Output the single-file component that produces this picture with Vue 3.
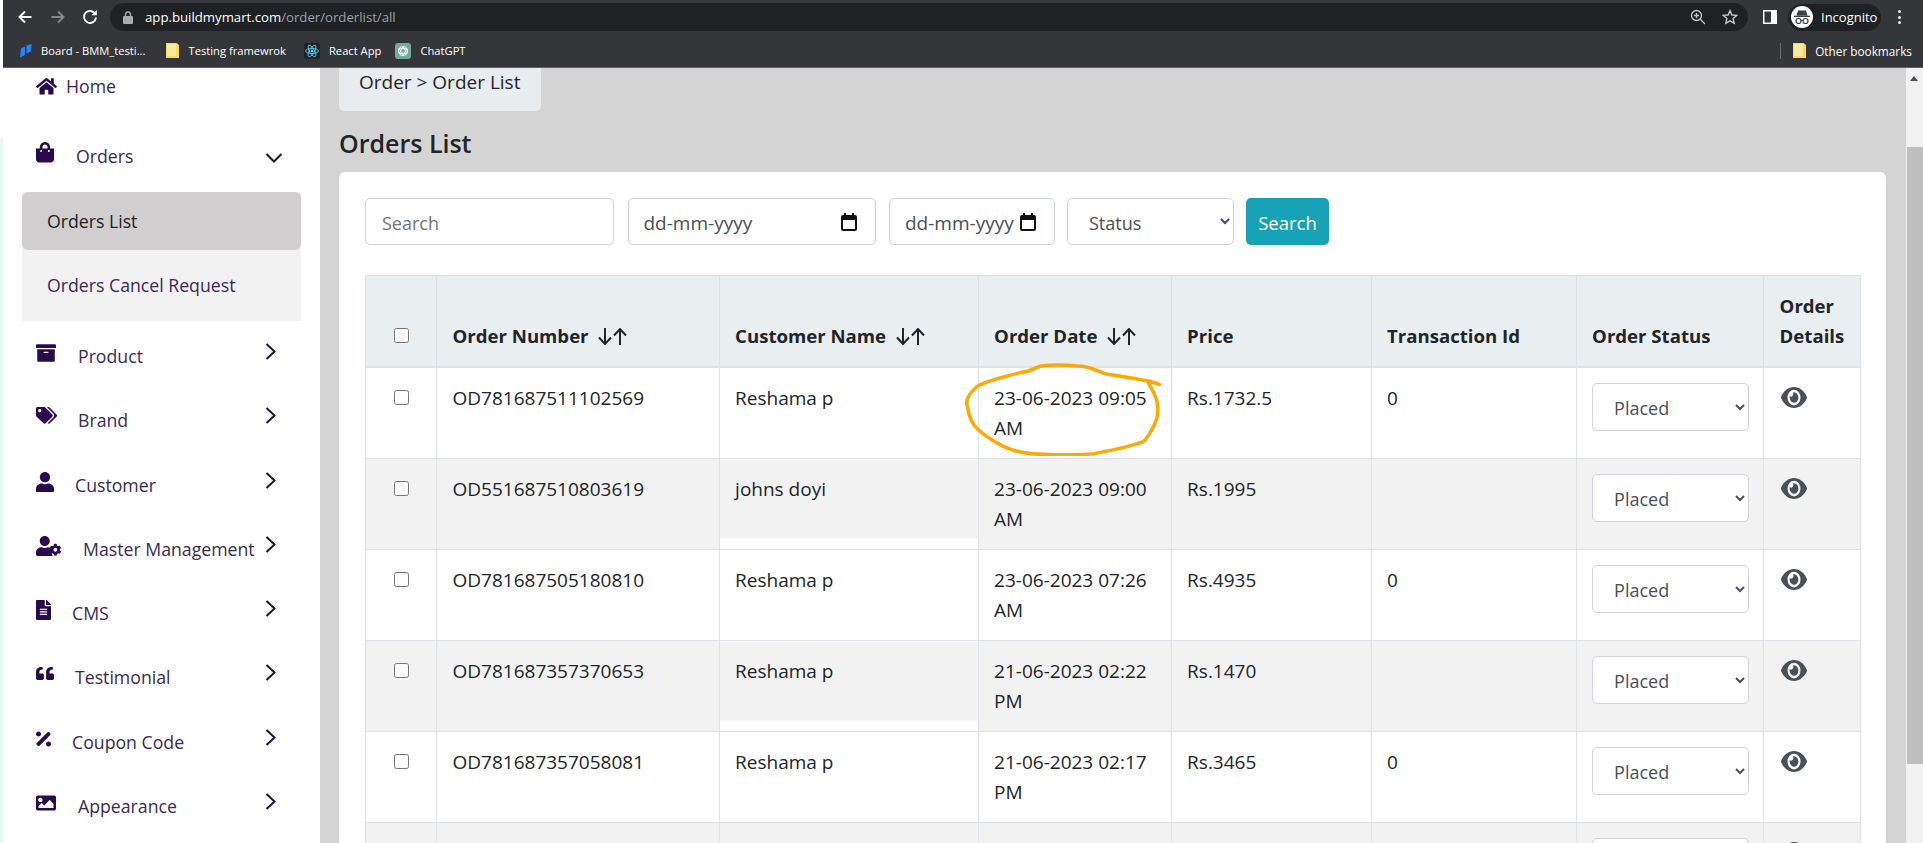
<template>
  <div class="page">
    <!-- browser chrome -->
    <header class="browser">
      <div class="toolbar">
        <svg class="tb-back" width="16" height="16" viewBox="0 0 16 16"><path d="M14.500 8H2.500M8 2.500 2.500 8 8 13.500" fill="none" stroke="#fff" stroke-width="2"/></svg>
        <svg class="tb-fwd" width="16" height="16" viewBox="0 0 16 16"><path d="M1.500 8h12M8 2.500 13.500 8 8 13.500" fill="none" stroke="#85878a" stroke-width="2"/></svg>
        <svg class="tb-reload" width="16" height="16" viewBox="0 0 16 16"><path d="M13.400 5.200A6 6 0 1 0 14 8.500" fill="none" stroke="#fff" stroke-width="1.900"/><path d="M9.500 6.200h5.300V.9z" fill="#fff"/></svg>
        <div class="address">
          <svg width="10" height="13" viewBox="0 0 10 13"><path d="M2.500 5.500V3.500a2.500 2.500 0 0 1 5 0v2" fill="none" stroke="#a9abae" stroke-width="1.300"/><rect y="5" width="10" height="8" rx="1" fill="#a9abae"/></svg>
          <span class="url"><b>app.buildmymart.com</b>/order/orderlist/all</span>
          <svg class="addr-zoom" width="16" height="16" viewBox="0 0 16 16"><circle cx="6.500" cy="6.500" r="5" fill="none" stroke="#c4c6c9" stroke-width="1.300"/><path d="M10 10l5 5M4 6.500h5M6.500 4v5" stroke="#c4c6c9" stroke-width="1.300"/></svg>
          <svg class="addr-star" width="16" height="16" viewBox="0 0 16 16"><path d="M8 1.600 9.900 6l4.800.4-3.600 3.200 1.100 4.700L8 11.800l-4.200 2.500 1.100-4.700L1.300 6.400 6.100 6z" fill="none" stroke="#c4c6c9" stroke-width="1.400"/></svg>
        </div>
        <svg class="tb-panel" width="14" height="14" viewBox="0 0 14 14"><rect width="14" height="14" fill="#fff"/><rect x="1.500" y="1.500" width="6.500" height="11" fill="#35363a"/></svg>
        <div class="profile">
          <span class="avatar">
            <svg width="18" height="16" viewBox="0 0 18 16"><path d="M5 1.500h8l1.500 5h-11zM1 6.800h16v1.200H1z" fill="#3c4043"/><g fill="none" stroke="#3c4043" stroke-width="1.200"><circle cx="5.500" cy="12" r="2.500"/><circle cx="12.500" cy="12" r="2.500"/><path d="M8 11.500h2"/></g></svg>
          </span>
          <span class="profile-name">Incognito</span>
        </div>
        <span class="menu-dots"><i></i><i></i><i></i></span>
      </div>
      <div class="bookmarks">
        <span class="bm bm-board">
          <svg width="13" height="14" viewBox="0 0 13 14"><path d="M2 4.500 6 2.500V11L1 13.500zM7.500 1.500 12.500 0 12 7.500 7.500 9.500z" fill="#2684ff"/></svg>
          Board - BMM_testi...
        </span>
        <span class="bm">
          <svg class="folder" width="13" height="15" viewBox="0 0 13 15"><path d="M0 0h10.500L13 2v13H0z" fill="#fdd663"/><path d="M1 1h9v12H1z" fill="#fee9a0"/></svg>
          Testing framewrok
        </span>
        <span class="bm bm-react">
          <span class="react-ico">
            <svg width="14" height="14" viewBox="0 0 14 14"><g fill="none" stroke="#61dafb" stroke-width=".8"><ellipse cx="7" cy="7" rx="6.500" ry="2.500"/><ellipse cx="7" cy="7" rx="6.500" ry="2.500" transform="rotate(60 7 7)"/><ellipse cx="7" cy="7" rx="6.500" ry="2.500" transform="rotate(120 7 7)"/></g><circle cx="7" cy="7" r="1.300" fill="#61dafb"/></svg>
          </span>
          React App
        </span>
        <span class="bm">
          <span class="gpt-ico">
            <svg width="12" height="12" viewBox="0 0 12 12"><g fill="none" stroke="#fff" stroke-width=".9"><circle cx="6" cy="6" r="4.600"/><path d="M6 1.400 9.900 8.300H2.100zM6 10.600 2.100 3.700h7.800z"/></g></svg>
          </span>
          ChatGPT
        </span>
        <span class="bm-sep"></span>
        <span class="bm bm-other">
          <svg class="folder" width="13" height="15" viewBox="0 0 13 15"><path d="M0 0h10.500L13 2v13H0z" fill="#fdd663"/><path d="M1 1h9v12H1z" fill="#fee9a0"/></svg>
          Other bookmarks
        </span>
      </div>
    </header>

    <div class="shell">
      <!-- sidebar -->
      <aside class="sidebar">
        <div class="nav-home">
          <svg width="21" viewBox="0 0 576 512"><path :d="icons.home" /></svg>
          <span>Home</span>
        </div>
        <div class="nav-orders">
          <svg width="18" viewBox="0 0 448 512"><path :d="icons.bag" /></svg>
          <span>Orders</span>
          <svg class="chev-down" width="18" height="10" viewBox="0 0 18 10"><path d="M1.500 1 9 8.500 16.500 1" fill="none" stroke="#1b1446" stroke-width="2"/></svg>
        </div>
        <div class="submenu">
          <div class="sub-active">Orders List</div>
          <div class="sub-item">Orders Cancel Request</div>
        </div>
        <div v-for="item in navItems" :key="item.label" class="nav-item">
          <span class="nav-icon" :style="{ width: item.gap + 'px' }">
            <svg :class="item.cls" :width="item.w" :viewBox="item.box" :preserveAspectRatio="item.cls ? 'none' : undefined"><path :d="item.d" /></svg>
          </span>
          <span class="nav-label">{{ item.label }}</span>
          <svg class="chev-right" width="11" height="17" viewBox="0 0 11 17"><path d="M1.500 1 9.500 8.500 1.500 16" fill="none" stroke="#1b1446" stroke-width="2"/></svg>
        </div>
      </aside>

      <!-- main -->
      <main class="main">
        <div class="crumb">Order &gt; Order List</div>
        <h1 class="title">Orders List</h1>
        <section class="card">
          <div class="filters">
            <input class="field f-search" type="text" placeholder="Search" />
            <div class="field date f-date1">
              <span>dd-mm-yyyy</span>
              <svg width="16" height="18" viewBox="0 0 16 18"><path :d="calendarPath" /></svg>
            </div>
            <div class="field date f-date2">
              <span class="date-clip">dd-mm-yyyy</span>
              <svg width="16" height="18" viewBox="0 0 16 18"><path :d="calendarPath" /></svg>
            </div>
            <select class="field f-status"><option>Status</option></select>
            <button type="button" class="btn-search">Search</button>
          </div>

          <table class="orders">
            <colgroup>
              <col v-for="w in colWidths" :key="w.id" :width="w.px" />
            </colgroup>
            <thead>
              <tr>
                <th class="center-check"><input type="checkbox" /></th>
                <th>Order Number <svg class="sort" width="29" height="17" viewBox="0 0 29 17"><path :d="sortPath" /></svg></th>
                <th>Customer Name <svg class="sort" width="29" height="17" viewBox="0 0 29 17"><path :d="sortPath" /></svg></th>
                <th>Order Date <svg class="sort" width="29" height="17" viewBox="0 0 29 17"><path :d="sortPath" /></svg></th>
                <th>Price</th>
                <th>Transaction Id</th>
                <th>Order Status</th>
                <th>Order Details</th>
              </tr>
            </thead>
            <tbody>
              <tr v-for="(row, i) in rows" :key="i">
                <td class="center-check"><input v-if="row.id" type="checkbox" /></td>
                <td>{{ row.id }}</td>
                <td :class="{ 'cell-cut': row.cut }">{{ row.name }}</td>
                <td class="date-cell">
                  {{ row.date }}
                  <svg v-if="row.circled" class="scribble" width="200" height="100" viewBox="960 355 200 100"><path d="M1158.300 383.300C1150 380 1125 376 1106.700 373.300C1095 370 1090 365 1076.700 365C1060 363.500 1048 364 1040 365C1032 367 1030 370 1023.300 370.700C1005 375 985 380 976.700 385C968 392 964 400 966.700 406.700C968 416 972 424 976.700 428.300C985 436 1000 445 1010 448.300C1020 452 1032 453.300 1043.300 453.300C1060 454 1080 454 1093.300 452.700C1110 449 1130 446 1143.300 440C1150 432 1158 418 1156.700 406.700C1157 396 1150 388 1146.700 380" fill="none" stroke="#ffa800" stroke-width="3.500" stroke-linecap="round"/></svg>
                </td>
                <td>{{ row.price }}</td>
                <td>{{ row.txn }}</td>
                <td><select class="row-status"><option>Placed</option></select></td>
                <td><svg class="eye" width="26" height="21" viewBox="0 64 576 384" preserveAspectRatio="none"><path :d="icons.eye" /></svg></td>
              </tr>
            </tbody>
          </table>
        </section>
      </main>

      <!-- page scrollbar -->
      <div class="scrollbar">
        <span class="scroll-up"></span>
        <span class="scroll-thumb"></span>
      </div>
    </div>
  </div>
</template>

<script setup>
const icons = {
  home: 'M280.37 148.26L96 300.11V464a16 16 0 0 0 16 16l112.06-.29a16 16 0 0 0 15.92-16V368a16 16 0 0 1 16-16h64a16 16 0 0 1 16 16v95.64a16 16 0 0 0 16 16.05L464 480a16 16 0 0 0 16-16V300L295.67 148.26a12.19 12.19 0 0 0-15.3 0zM571.6 251.47L488 182.56V44.05a12 12 0 0 0-12-12h-56a12 12 0 0 0-12 12v72.61L318.47 43a48 48 0 0 0-61 0L4.34 251.47a12 12 0 0 0-1.6 16.9l25.5 31A12 12 0 0 0 45.15 301l235.22-193.74a12.19 12.19 0 0 1 15.3 0L530.9 301a12 12 0 0 0 16.9-1.6l25.5-31a12 12 0 0 0-1.7-16.93z',
  bag: 'M352 160v-32C352 57.42 294.579 0 224 0 153.42 0 96 57.42 96 128v32H0v272c0 44.183 35.817 80 80 80h288c44.183 0 80-35.817 80-80V160h-96zm-192-32c0-35.29 28.71-64 64-64s64 28.71 64 64v32H160v-32zm160 120c-13.255 0-24-10.745-24-24s10.745-24 24-24 24 10.745 24 24-10.745 24-24 24zm-192 0c-13.255 0-24-10.745-24-24s10.745-24 24-24 24 10.745 24 24-10.745 24-24 24z',
  eye: 'M572.52 241.4C518.29 135.59 410.93 64 288 64S57.68 135.64 3.48 241.41a32.35 32.35 0 0 0 0 29.19C57.71 376.41 165.07 448 288 448s230.32-71.64 284.52-177.41a32.35 32.35 0 0 0 0-29.19zM288 400a144 144 0 1 1 144-144 143.93 143.93 0 0 1-144 144zm0-240a95.31 95.31 0 0 0-25.31 3.79 47.85 47.85 0 0 1-66.9 66.9A95.78 95.78 0 1 0 288 160z'
}

const navItems = [
  { label: 'Product', gap: 43, w: 20, box: '0 0 512 512', d: 'M32 448c0 17.7 14.3 32 32 32h384c17.7 0 32-14.3 32-32V160H32v288zm160-212c0-6.6 5.4-12 12-12h104c6.6 0 12 5.4 12 12v8c0 6.6-5.4 12-12 12H204c-6.6 0-12-5.4-12-12v-8zM480 32H32C14.3 32 0 46.3 0 64v48c0 8.8 7.2 16 16 16h480c8.8 0 16-7.2 16-16V64c0-17.7-14.3-32-32-32z' },
  { label: 'Brand', gap: 43, w: 21, box: '0 0 640 512', d: 'M497.941 225.941L286.059 14.059A48 48 0 0 0 252.118 0H48C21.49 0 0 21.49 0 48v204.118a48 48 0 0 0 14.059 33.941l211.882 211.882c18.744 18.745 49.136 18.746 67.882 0l204.118-204.118c18.745-18.745 18.745-49.137 0-67.882zM112 160c-26.51 0-48-21.49-48-48s21.49-48 48-48 48 21.49 48 48-21.49 48-48 48zm513.941 133.823L421.823 497.941c-18.745 18.745-49.137 18.745-67.882 0l-.36-.36L527.64 323.522c16.999-16.999 26.36-39.6 26.36-63.64s-9.362-46.641-26.36-63.64L331.397 0h48.721a48 48 0 0 1 33.941 14.059l211.882 211.882c18.745 18.745 18.745 49.137 0 67.882z' },
  { label: 'Customer', gap: 40, w: 18, box: '0 0 448 512', d: 'M224 256c70.7 0 128-57.3 128-128S294.7 0 224 0 96 57.3 96 128s57.3 128 128 128zm89.6 32h-16.7c-22.2 10.2-46.9 16-72.9 16s-50.6-5.8-72.9-16h-16.7C60.2 288 0 348.2 0 422.4V464c0 26.5 21.5 48 48 48h352c26.5 0 48-21.5 48-48v-41.6c0-74.2-60.2-134.4-134.4-134.4z' },
  { label: 'Master Management', gap: 48, w: 25, box: '0 0 640 512', d: 'M610.5 373.3c2.6-14.1 2.6-28.5 0-42.6l25.8-14.9c3-1.7 4.3-5.2 3.3-8.5-6.7-21.6-18.2-41.2-33.2-57.4-2.3-2.5-6-3.1-9-1.4l-25.8 14.9c-10.9-9.3-23.4-16.5-36.9-21.3v-29.8c0-3.4-2.4-6.4-5.7-7.1-22.3-5-45-4.8-66.2 0-3.3.7-5.7 3.7-5.7 7.1v29.8c-13.5 4.8-26 12-36.9 21.3l-25.8-14.9c-2.9-1.7-6.7-1.1-9 1.4-15 16.2-26.5 35.8-33.2 57.4-1 3.3.4 6.8 3.3 8.5l25.8 14.9c-2.6 14.1-2.6 28.5 0 42.6l-25.8 14.9c-3 1.7-4.3 5.2-3.3 8.5 6.7 21.6 18.2 41.1 33.2 57.4 2.3 2.5 6 3.1 9 1.4l25.8-14.9c10.9 9.3 23.4 16.5 36.9 21.3v29.8c0 3.4 2.4 6.4 5.7 7.1 22.3 5 45 4.8 66.2 0 3.3-.7 5.7-3.7 5.7-7.1v-29.8c13.5-4.8 26-12 36.9-21.3l25.8 14.9c2.9 1.7 6.7 1.1 9-1.4 15-16.2 26.5-35.8 33.2-57.4 1-3.3-.4-6.8-3.3-8.5l-25.8-14.9zM496 400.5c-26.8 0-48.5-21.8-48.5-48.5s21.8-48.5 48.5-48.5 48.5 21.8 48.5 48.5-21.7 48.5-48.5 48.5zM224 256c70.7 0 128-57.3 128-128S294.7 0 224 0 96 57.3 96 128s57.3 128 128 128zM313.6 288h-16.7c-22.2 10.2-46.9 16-72.9 16s-50.6-5.8-72.9-16h-16.7C60.2 288 0 348.2 0 422.4V464c0 26.5 21.5 48 48 48h352c10 0 19-3 27-8-20-30-40-90-20-150-10-30-50-66-93.4-66z' },
  { label: 'CMS', gap: 37, w: 15, box: '0 0 384 512', d: 'M224 136V0H24C10.7 0 0 10.7 0 24v464c0 13.3 10.7 24 24 24h336c13.3 0 24-10.7 24-24V160H248c-13.2 0-24-10.8-24-24zm64 236c0 6.6-5.4 12-12 12H108c-6.6 0-12-5.4-12-12v-8c0-6.6 5.4-12 12-12h168c6.6 0 12 5.4 12 12v8zm0-64c0 6.6-5.4 12-12 12H108c-6.6 0-12-5.4-12-12v-8c0-6.6 5.4-12 12-12h168c6.6 0 12 5.4 12 12v8zm0-72v8c0 6.6-5.4 12-12 12H108c-6.6 0-12-5.4-12-12v-8c0-6.6 5.4-12 12-12h168c6.6 0 12 5.4 12 12zm96-114.1v6.1H256V0h6.1c6.4 0 12.5 2.5 17 7l97.9 98c4.5 4.5 7 10.6 7 16.9z' },
  { label: 'Testimonial', gap: 40, w: 18, cls: 'ico-quote', box: '0 32 512 448', d: 'M464 256h-80v-64c0-35.3 28.7-64 64-64h8c13.3 0 24-10.7 24-24V56c0-13.3-10.7-24-24-24h-8c-88.4 0-160 71.6-160 160v240c0 26.5 21.5 48 48 48h128c26.5 0 48-21.5 48-48V304c0-26.5-21.5-48-48-48zm-288 0H96v-64c0-35.3 28.7-64 64-64h8c13.3 0 24-10.7 24-24V56c0-13.3-10.7-24-24-24h-8C71.6 32 0 103.6 0 192v240c0 26.5 21.5 48 48 48h128c26.5 0 48-21.5 48-48V304c0-26.5-21.5-48-48-48z' },
  { label: 'Coupon Code', gap: 37, w: 15, box: '0 0 384 512', d: 'M109.25 173.25c24.99-24.99 24.99-65.52 0-90.51-24.99-24.99-65.52-24.99-90.51 0-24.99 24.99-24.99 65.52 0 90.51 25 25 65.52 25 90.51 0zm256 165.49c-24.99-24.99-65.52-24.99-90.51 0-24.99 24.99-24.99 65.52 0 90.51 24.99 24.99 65.52 24.99 90.51 0 25-24.99 25-65.51 0-90.51zm-1.94-231.43l-22.62-22.62c-12.5-12.5-32.76-12.5-45.25 0L20.69 359.44c-12.5 12.5-12.5 32.76 0 45.25l22.62 22.62c12.5 12.5 32.76 12.5 45.25 0l274.75-274.75c12.5-12.49 12.5-32.75 0-45.25z' },
  { label: 'Appearance', gap: 43, w: 20, box: '0 0 512 512', d: 'M464 448H48c-26.51 0-48-21.49-48-48V112c0-26.51 21.49-48 48-48h416c26.51 0 48 21.49 48 48v288c0 26.51-21.49 48-48 48zM112 120c-30.928 0-56 25.072-56 56s25.072 56 56 56 56-25.072 56-56-25.072-56-56-56zM64 384h384V272l-87.515-87.515c-4.686-4.686-12.284-4.686-16.971 0L208 320l-55.515-55.515c-4.686-4.686-12.284-4.686-16.971 0L64 336v48z' }
]

const calendarPath = 'M3 0h2v2h6V0h2v2h1a2 2 0 0 1 2 2v12a2 2 0 0 1-2 2H2a2 2 0 0 1-2-2V4a2 2 0 0 1 2-2h1zM2 7v9h12V7z'
const sortPath = 'M7 0v15.500M1 9.500l6 6.500 6-6.500M22 17V1.500M16 7.500l6-6.500 6 6.500'

const colWidths = [71, 282.6, 259, 193, 200, 205, 187.5, 96.9].map((px, id) => ({ id, px }))

const rows = [
  { id: 'OD781687511102569', name: 'Reshama p', date: '23-06-2023 09:05 AM', price: 'Rs.1732.5', txn: '0', circled: true },
  { id: 'OD551687510803619', name: 'johns doyi', date: '23-06-2023 09:00 AM', price: 'Rs.1995', txn: '', cut: true },
  { id: 'OD781687505180810', name: 'Reshama p', date: '23-06-2023 07:26 AM', price: 'Rs.4935', txn: '0' },
  { id: 'OD781687357370653', name: 'Reshama p', date: '21-06-2023 02:22 PM', price: 'Rs.1470', txn: '', cut: true },
  { id: 'OD781687357058081', name: 'Reshama p', date: '21-06-2023 02:17 PM', price: 'Rs.3465', txn: '0' },
  { id: '', name: '', date: '', price: '', txn: '' }
]
</script>

<style scoped>
.page {
  display: flex;
  flex-direction: column;
  height: 843px;
  overflow: hidden;
  font-family: "Open Sans", "Liberation Sans", sans-serif;
  color: #212529;
}

/* browser chrome */
.browser {
  height: 68px;
  margin-left: 3px;
  background: #35363a;
  border-bottom: 1px solid #5f6165;
  box-sizing: border-box;
  color: #fff;
  font-size: 11.200px;
  flex: none;
}
.toolbar {
  display: flex;
  align-items: center;
  height: 34px;
}
.tb-back { margin-left: 14px; }
.tb-fwd { margin-left: 17px; }
.tb-reload { margin-left: 16px; }
.address {
  display: flex;
  align-items: center;
  width: 1638px;
  height: 28px;
  margin-left: 12px;
  padding-left: 13px;
  box-sizing: border-box;
  background: #202124;
  border-radius: 14px;
}
.url {
  margin-left: 12px;
  font-size: 13.200px;
  color: #9aa0a6;
}
.url b { font-weight: 400; color: #fff; }
.addr-zoom { margin-left: auto; }
.addr-star { margin-left: 16px; margin-right: 10px; }
.tb-panel { margin-left: 15px; }
.profile {
  display: flex;
  align-items: center;
  width: 93px;
  height: 27px;
  margin-left: 11px;
  padding-left: 3px;
  box-sizing: border-box;
  background: #202124;
  border-radius: 14px;
  font-size: 13px;
}
.avatar {
  display: flex;
  align-items: center;
  justify-content: center;
  width: 22px;
  height: 22px;
  border-radius: 50%;
  background: #fff;
}
.profile-name { margin-left: 8px; }
.menu-dots {
  display: flex;
  flex-direction: column;
  gap: 2.500px;
  margin-left: 17px;
}
.menu-dots i {
  width: 3px;
  height: 3px;
  border-radius: 50%;
  background: #e8eaed;
}
.bookmarks {
  display: flex;
  align-items: center;
  height: 33px;
  padding-left: 16px;
}
.bm {
  display: flex;
  align-items: center;
  gap: 9px;
  margin-right: 18px;
  white-space: nowrap;
}
.bm-board { margin-right: 21px; }
.bm-react { margin-right: 14px; }
.react-ico {
  display: flex;
  align-items: center;
  justify-content: center;
  width: 16px;
  height: 16px;
  background: #20232a;
  border-radius: 2px;
}
.gpt-ico {
  display: flex;
  align-items: center;
  justify-content: center;
  width: 16px;
  height: 16px;
  background: #74aa9c;
  border-radius: 3px;
}
.bm-sep {
  width: 1px;
  height: 16px;
  margin-left: auto;
  margin-right: 12px;
  background: #6a6c70;
}
.bm-other { margin-right: 11px; font-size: 11.800px; }

/* layout */
.shell {
  display: flex;
  flex: 1;
  min-height: 0;
}

/* sidebar */
.sidebar {
  flex: none;
  width: 320px;
  background: #fff;
  color: #3b2a55;
  font-size: 17.700px;
  line-height: 26px;
  position: relative;
}
.sidebar::before {
  content: "";
  position: absolute;
  left: 0;
  top: 70px;
  bottom: 0;
  width: 3px;
  background: #e4faf1;
}
.sidebar svg path { fill: #2a0a4f; }
.sidebar svg { flex: none; display: block; }
.nav-home {
  display: flex;
  align-items: flex-start;
  gap: 9px;
  height: 56px;
  padding: 5px 0 0 36px;
  box-sizing: border-box;
}
.nav-home svg { margin-top: 4px; }
.nav-orders {
  display: flex;
  align-items: flex-start;
  height: 68px;
  padding: 19px 0 0 36px;
  box-sizing: border-box;
  position: relative;
}
.nav-orders > svg:first-child { margin-top: -1px; }
.nav-orders span { margin-left: 22px; }
.sidebar .chev-down { position: absolute; left: 265px; top: 29px; }
.sidebar .chev-down path { fill: none; }
.submenu {
  width: 279px;
  margin-left: 22px;
  background: #f2f2f2;
}
.sub-active {
  height: 58px;
  padding-left: 25px;
  line-height: 58px;
  background: #d0cecf;
  border-radius: 6px;
  color: #222;
}
.sub-item {
  height: 71px;
  padding-left: 25px;
  line-height: 71px;
}
.nav-item {
  display: flex;
  align-items: flex-start;
  height: 64.300px;
  padding: 22px 0 0 36px;
  box-sizing: border-box;
  position: relative;
}
.nav-icon { flex: none; margin-right: -1px; }
.nav-label { white-space: nowrap; }
.ico-quote { height: 13px; margin-top: 3px; }
.sidebar .chev-right { position: absolute; left: 265px; top: 22px; }
.sidebar .chev-right path { fill: none; }

/* main */
.main {
  flex: 1;
  min-width: 0;
  padding: 0 20px 0 19px;
  background: #d4d4d4;
  overflow: hidden;
}
.crumb {
  width: 202px;
  height: 43px;
  padding-left: 20px;
  box-sizing: border-box;
  background: #e9ecef;
  border-radius: 0 0 5px 5px;
  font-size: 19px;
  line-height: 28px;
  white-space: nowrap;
}
.title {
  margin: 14px 0 11px;
  font-size: 25px;
  line-height: 36px;
  font-weight: 600;
}
.card {
  padding: 26px;
  background: #fff;
  border-radius: 6px 6px 0 0;
  height: 700px;
  box-sizing: border-box;
}
.filters {
  display: flex;
  gap: 13.500px;
  margin-bottom: 30px;
}
.field {
  height: 47px;
  box-sizing: border-box;
  border: 1px solid #ced4da;
  border-radius: 5px;
  background: #fff;
  font: inherit;
  font-size: 18px;
  color: #495057;
}
.f-search { width: 249px; padding: 2px 16px 0; }
.f-search::placeholder { color: #6c757d; }
.date {
  display: flex;
  align-items: center;
  padding: 2px 0 0 15px;
  font-size: 19px;
}
.date svg { margin-top: -2px; }
.f-date1 { width: 248px; }
.f-date1 svg { margin-left: auto; margin-right: 18px; }
.f-date2 { width: 166px; flex: none; }
.f-date2 svg { margin-left: 4px; }
.date-clip {
  display: block;
  width: 111px;
  overflow: hidden;
  white-space: nowrap;
}
.date svg path { fill: #111; }
.f-status { width: 167px; margin-left: -1.500px; padding: 2px 0 0 17px; }
.btn-search {
  width: 83px;
  height: 47px;
  margin-left: -1.500px;
  padding: 2px 0 0;
  border: 0;
  border-radius: 5px;
  background: #17a2b8;
  color: #fff;
  font: inherit;
  font-size: 18.500px;
}

/* table */
.orders {
  width: 1495px;
  table-layout: fixed;
  border-collapse: collapse;
  font-size: 19px;
  line-height: 30px;
}
.orders th,
.orders td {
  padding: 15px 15.500px;
  border: 1px solid #dee2e6;
  vertical-align: top;
  text-align: left;
}
.orders th {
  vertical-align: bottom;
  background: #e9eef1;
  border-bottom-width: 2px;
  font-size: 18.600px;
  font-weight: 700;
}
.orders tbody tr:nth-child(even) td { background: #f2f2f2; }
.orders tbody tr:nth-child(even) td.cell-cut {
  background: linear-gradient(#f2f2f2 79px, #fff 79px);
}
.orders input[type="checkbox"] {
  width: 15px;
  height: 15px;
  margin: 7px 0 0;
  display: block;
}
.center-check { padding-left: 28px !important; padding-right: 0 !important; }
th.center-check input[type="checkbox"] { margin: 6px 0 8px; }
.sort { margin-left: 5px; vertical-align: -2px; }
.sort path { fill: none; stroke: #212529; stroke-width: 2; }
.date-cell { position: relative; }
.scribble {
  position: absolute;
  left: -18px;
  top: -12px;
  pointer-events: none;
}
.row-status {
  display: block;
  width: 157px;
  height: 48px;
  padding: 2px 0 0 17px;
  box-sizing: border-box;
  border: 1px solid #ced4da;
  border-radius: 5px;
  background: #fff;
  font: inherit;
  font-size: 18px;
  color: #495057;
}
.eye { display: block; margin: 4px 0 0 1px; }
.eye path { fill: #495057; }

/* scrollbar */
.scrollbar {
  flex: none;
  width: 17px;
  background: #f1f1f1;
  position: relative;
}
.scroll-up {
  position: absolute;
  left: 4px;
  top: 8px;
  border: 4px solid transparent;
  border-top: 0;
  border-bottom: 5px solid #505050;
}
.scroll-thumb {
  position: absolute;
  left: 1px;
  right: 0;
  top: 79px;
  height: 617px;
  background: #bebebe;
}
</style>

<style>
html, body {
  margin: 0;
  overflow: hidden;
  background: #fff;
}
</style>
